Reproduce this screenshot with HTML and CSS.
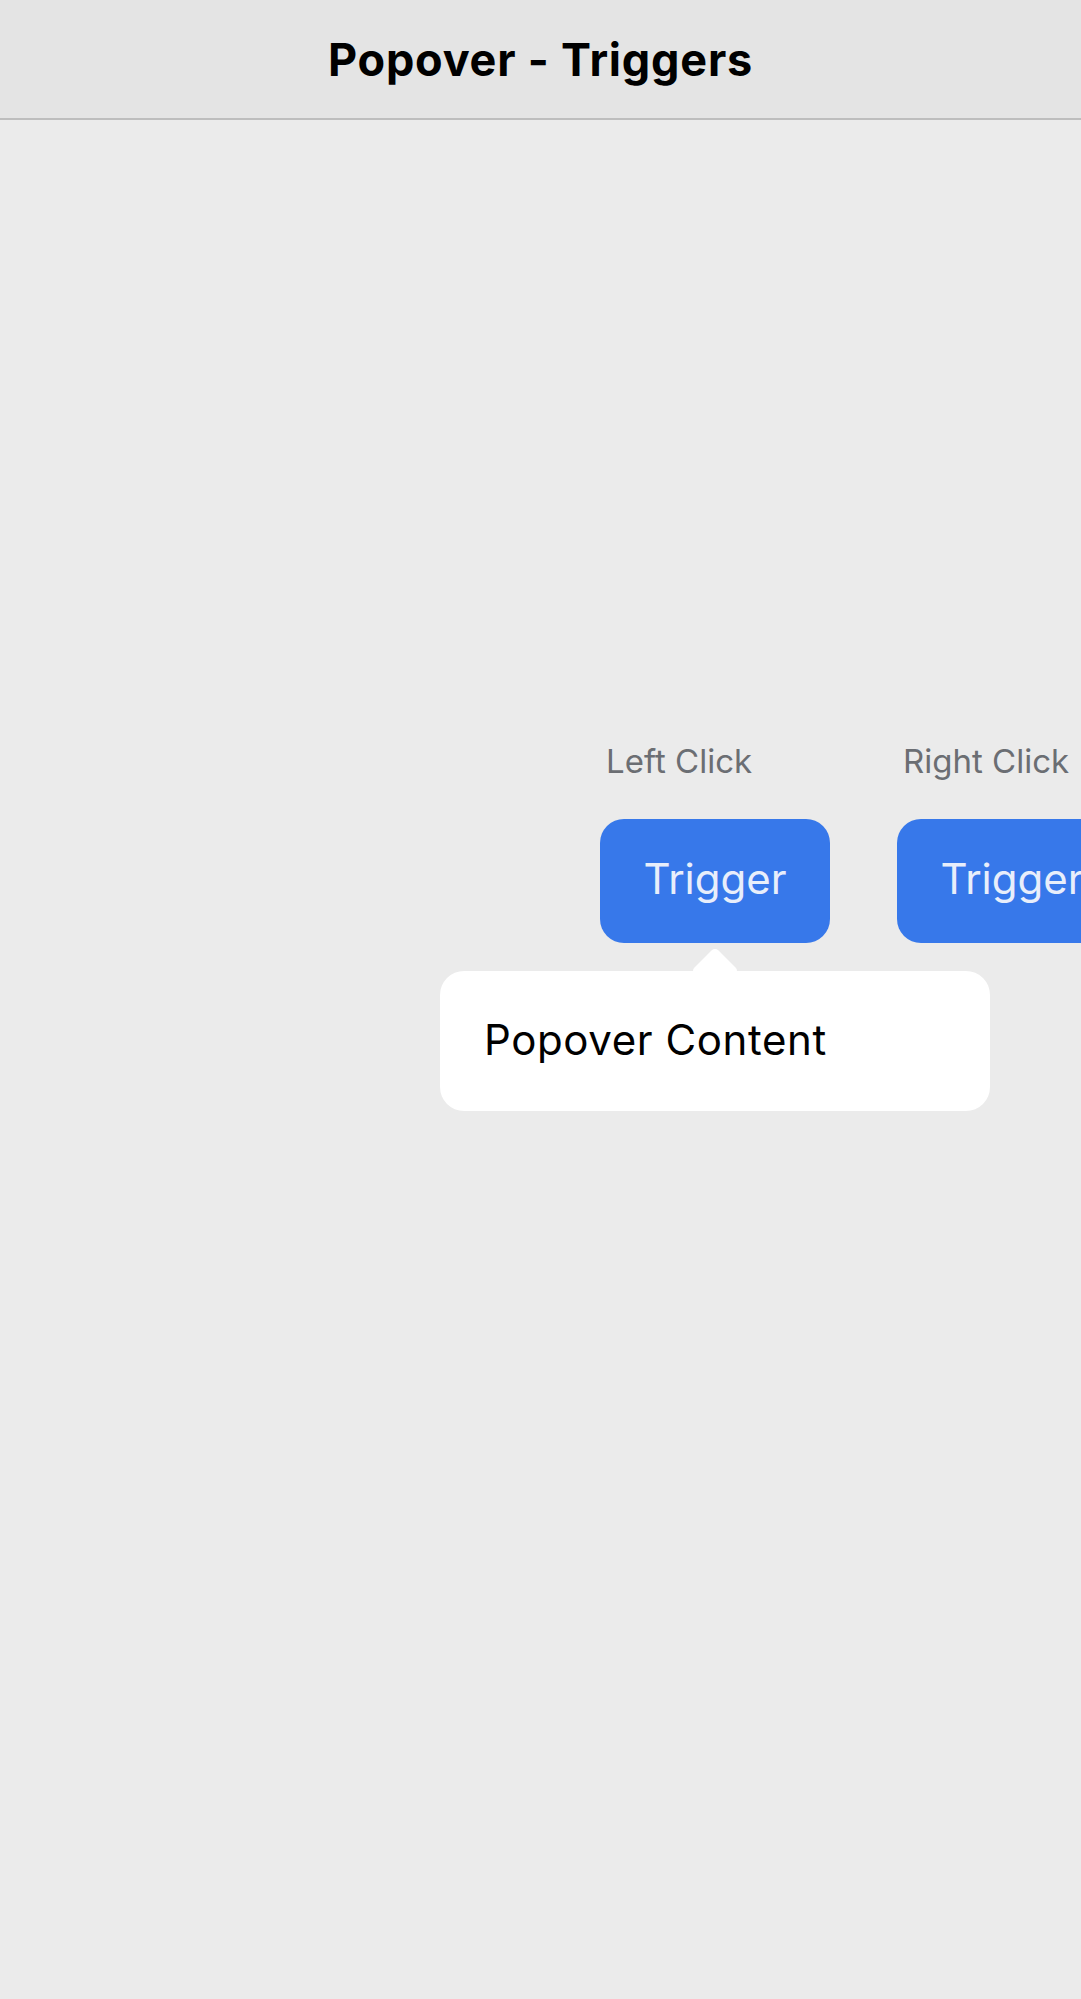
FILE: index.html
```html
<!DOCTYPE html>
<html lang="en">
<head>
<meta charset="utf-8">
<title>Popover - Triggers</title>
<link rel="stylesheet" href="styles.css">
</head>
<body>
<header class="header">
  <h1 class="title">Popover - Triggers</h1>
</header>
<main class="stage">
  <div class="row">
    <div class="col">
      <div class="label">Left Click</div>
      <div class="anchor">
        <button class="trigger">Trigger</button>
        <div class="popover">
          <span class="arrow"></span>
          <span class="popover-text">Popover Content</span>
        </div>
      </div>
    </div>
    <div class="col">
      <div class="label">Right Click</div>
      <div class="anchor">
        <button class="trigger">Trigger</button>
      </div>
    </div>
  </div>
</main>
</body>
</html>
```

FILE: styles.css
```css
html, body {
  margin: 0;
  padding: 0;
}
body {
  width: 1081px;
  height: 1999px;
  background: #ebebeb;
  font-family: Inter, "Noto Sans", sans-serif;
  overflow: hidden;
}
.header {
  height: 118px;
  background: #e4e4e4;
  border-bottom: 2px solid #bdbdbd;
  display: flex;
  align-items: center;
  justify-content: center;
}
.title {
  margin: 0;
  font-size: 45px;
  font-weight: 700;
  color: #000;
  letter-spacing: 0.8px;
}
.stage {
  padding-top: 621px;
  height: 1258px;
  overflow: hidden;
  width: 1081px;
}
.row {
  display: flex;
  gap: 67px;
  padding-left: 600px;
  width: max-content;
}
.col {
  display: flex;
  flex-direction: column;
  width: 230px;
}
.label {
  font-size: 33px;
  line-height: 40px;
  color: #6b6e73;
  margin-left: 6px;
  margin-bottom: 38px;
  white-space: nowrap;
}
.anchor {
  position: relative;
}
.trigger {
  width: 230px;
  height: 124px;
  border: none;
  border-radius: 24px;
  background: #3778ea;
  color: #e8eefb;
  font-family: Inter, "Noto Sans", sans-serif;
  font-size: 42px;
  padding: 0 0 6px 0;
  display: block;
}
.popover {
  position: absolute;
  top: 152px;
  left: 50%;
  margin-left: -275px;
  width: 550px;
  height: 140px;
  box-sizing: border-box;
  background: #ffffff;
  border-radius: 24px;
  display: flex;
  align-items: center;
  padding: 0 0 4px 44px;
}
.arrow {
  position: absolute;
  top: -17px;
  left: 50%;
  margin-left: -17px;
  width: 34px;
  height: 34px;
  background: #ffffff;
  border-radius: 5px;
  transform: rotate(45deg);
}
.popover-text {
  position: relative;
  font-size: 42px;
  letter-spacing: 0.6px;
  color: #000;
  white-space: nowrap;
}
```
